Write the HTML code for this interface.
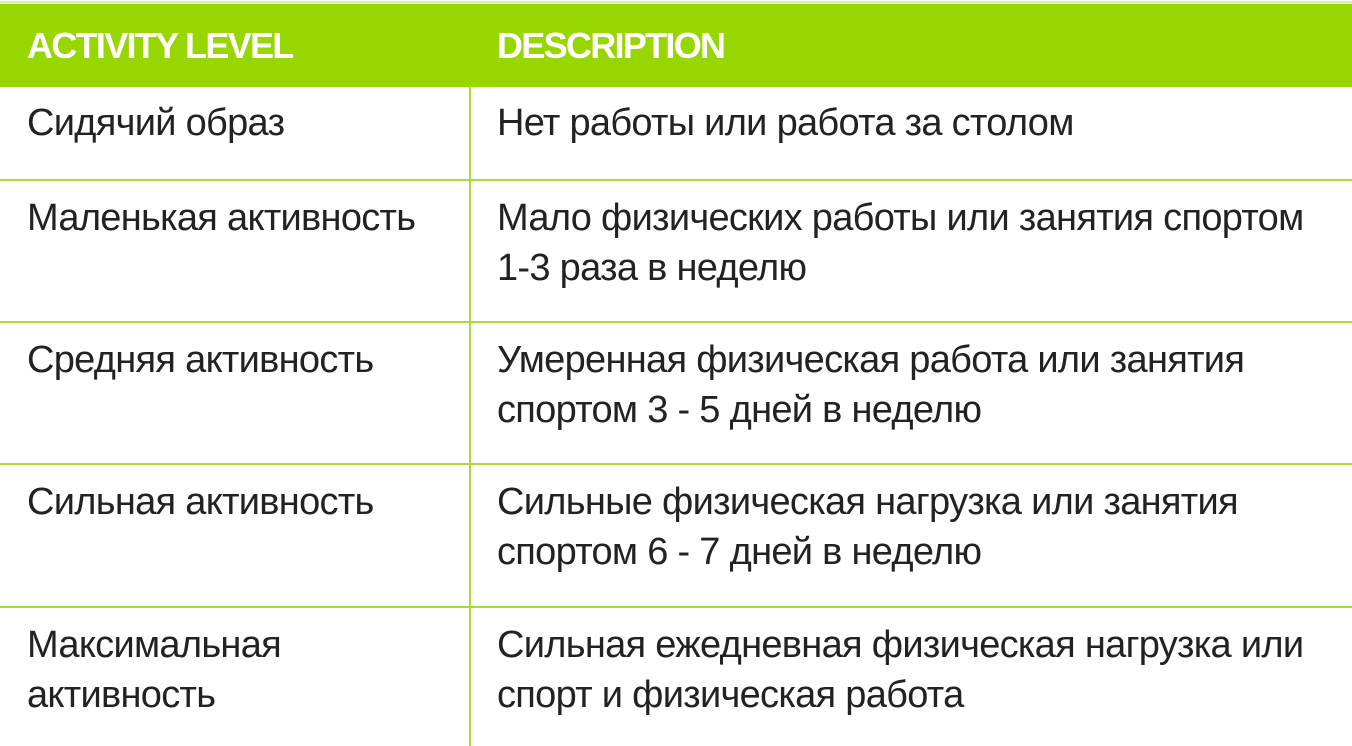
<!DOCTYPE html>
<html><head><meta charset="utf-8"><style>
body{margin:0;width:1352px;height:746px;background:#fff;position:relative;overflow:hidden;font-family:"Liberation Sans",Arial,sans-serif;}
.hd{position:absolute;left:0;top:4px;width:1352px;height:83px;background:#98d600;}
.top{position:absolute;left:0;top:1px;width:1352px;height:2px;background:#d8efa8;}
.h{position:absolute;top:24px;color:#fff;font-weight:bold;font-size:36px;letter-spacing:-1.7px;line-height:44px;}
.v{position:absolute;left:469px;top:87px;width:2px;height:659px;background:#a8dc3a;}
.l{position:absolute;left:0;width:1352px;height:2px;background:#a8dc3a;}
.t{position:absolute;font-size:38px;color:#222;line-height:50px;letter-spacing:-0.7px;}
</style></head><body>
<div class="top"></div>
<div class="hd"></div>
<div class="h" style="left:27px">ACTIVITY LEVEL</div>
<div class="h" style="left:497px">DESCRIPTION</div>
<div class="v"></div>
<div class="l" style="top:179px"></div>
<div class="l" style="top:321px"></div>
<div class="l" style="top:463px"></div>
<div class="l" style="top:606px"></div>
<div class="t" style="left:27px;top:98px">Сидячий образ</div>
<div class="t" style="left:497px;top:98px">Нет работы или работа за столом</div>
<div class="t" style="left:27px;top:193px">Маленькая активность</div>
<div class="t" style="left:497px;top:193px">Мало физических работы или занятия спортом<br>1-3 раза в неделю</div>
<div class="t" style="left:27px;top:335px">Средняя активность</div>
<div class="t" style="left:497px;top:335px">Умеренная физическая работа или занятия<br>спортом 3 - 5 дней в неделю</div>
<div class="t" style="left:27px;top:477px">Сильная активность</div>
<div class="t" style="left:497px;top:477px">Сильные физическая нагрузка или занятия<br>спортом 6 - 7 дней в неделю</div>
<div class="t" style="left:27px;top:620px">Максимальная<br>активность</div>
<div class="t" style="left:497px;top:620px">Сильная ежедневная физическая нагрузка или<br>спорт и физическая работа</div>
</body></html>
